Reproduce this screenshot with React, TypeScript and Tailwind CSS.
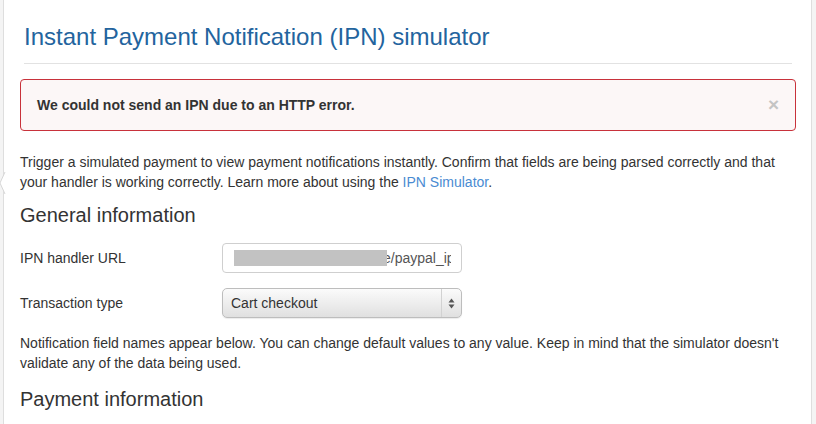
export default function App() {
  return (
    <div className="flex h-[424px] w-[816px] overflow-hidden bg-[#f4f4f4] font-['Liberation_Sans',Arial,sans-serif] text-[#333]">
      <div className="relative ml-[3px] mr-[4px] flex-1 border-l border-r border-[#dedede] bg-white pl-[16px] pr-[15px]">
        {/* popover notch on the left edge */}
        <svg className="absolute left-[-5px] top-[172px]" width="7" height="22" viewBox="0 0 7 22">
          <path d="M6 0 L1 11 L6 22" fill="#fff" stroke="#d6d6d6" strokeWidth="1" />
        </svg>

        <div className="mx-[4px] mt-[22px] border-b border-[#e2e2e2] pb-[12px]">
          <h1 className="text-[24px] leading-[29px] text-[#23649e]">
            Instant Payment Notification (IPN) simulator
          </h1>
        </div>

        <div className="mt-[15px] flex items-center justify-between rounded-[4px] border border-[#c8323b] bg-[#fcf7f7] py-[15px] pl-[16px] pr-[16px]">
          <span className="text-[14px] font-bold leading-[20px] text-[#333]">
            We could not send an IPN due to an HTTP error.
          </span>
          <span className="text-[19px] font-bold leading-[20px] text-[#c4c4c4]">×</span>
        </div>

        <p className="mt-[21px] text-[14px] leading-[20px]">
          Trigger a simulated payment to view payment notifications instantly. Confirm that fields are being parsed
          correctly and that your handler is working correctly. Learn more about using the{" "}
          <a className="text-[#4a8bd2]">IPN Simulator</a>.
        </p>

        <h2 className="mt-[11px] text-[20px] leading-[24px] text-[#333]">General information</h2>

        <div className="mt-[16px] flex items-center">
          <label className="w-[202px] text-[14px] leading-[20px]">IPN handler URL</label>
          <div className="flex h-[30px] w-[240px] items-center overflow-hidden rounded-[4px] border border-[#cfcfcf] bg-white pl-[11px] pr-[10px]">
            <div className="relative z-10 h-[16px] w-[153px] shrink-0 bg-[#c2c2c2]" />
            <span className="-ml-[4px] min-w-0 flex-1 overflow-hidden whitespace-nowrap text-[14px] text-[#555]">
              e/paypal_ipn
            </span>
          </div>
        </div>

        <div className="mt-[15px] flex items-center">
          <label className="w-[202px] text-[14px] leading-[20px]">Transaction type</label>
          <div className="flex h-[30px] w-[240px] items-center rounded-[5px] border border-[#bdbdbd] bg-gradient-to-b from-[#fbfbfb] to-[#e0e0e0] shadow-[0_1px_1px_rgba(0,0,0,0.08)]">
            <span className="flex-1 pl-[8px] text-[14px] text-[#333]">Cart checkout</span>
            <div className="flex h-full w-[20px] items-center justify-center border-l border-[#d2d2d2]">
              <svg width="7" height="11" viewBox="0 0 7 11">
                <path d="M3.5 0.5 L6.5 4.5 L0.5 4.5 Z" fill="#555" />
                <path d="M3.5 10.5 L6.5 6.5 L0.5 6.5 Z" fill="#555" />
              </svg>
            </div>
          </div>
        </div>

        <p className="mt-[15px] text-[14px] leading-[20px]">
          Notification field names appear below. You can change default values to any value. Keep in mind that the
          simulator doesn't validate any of the data being used.
        </p>

        <h2 className="mt-[14px] text-[20px] leading-[24px] text-[#333]">Payment information</h2>
      </div>
    </div>
  );
}
